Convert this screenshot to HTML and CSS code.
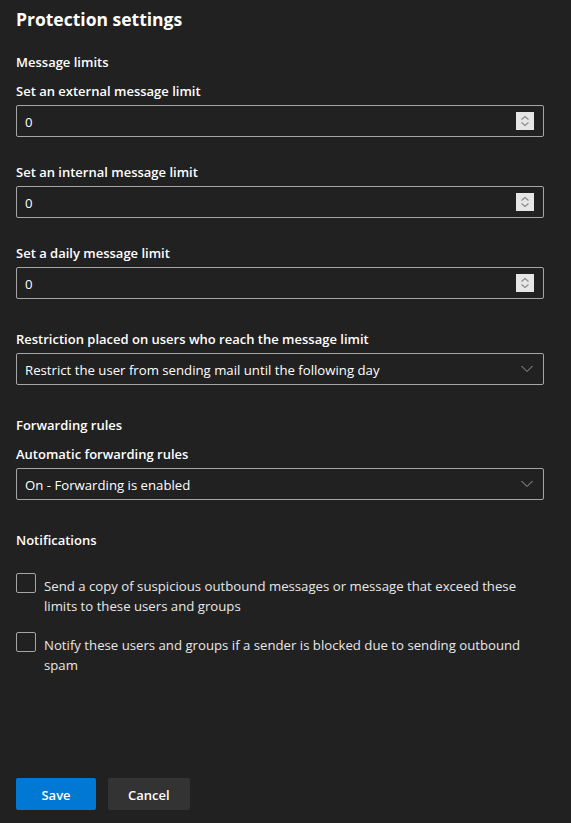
FILE: index.html
```html
<!DOCTYPE html>
<html lang="en">
<head>
  <meta charset="UTF-8" />
  <title>Protection settings</title>
  <link rel="stylesheet" href="styles.css">
</head>
<body>
<main class="panel">
  <h1>Protection settings</h1>

  <h2 class="group">Message limits</h2>
  <label class="label first">Set an external message limit</label>
  <div class="input">
    <span class="value">0</span>
    <span class="spin"><svg viewBox="0 0 18 18" width="18" height="18"><path d="M5.5 7.5 9 4.5l3.5 3M5.5 10.5 9 13.5l3.5-3" fill="none" stroke="#8a8a8a" stroke-width="1.1"/></svg></span>
  </div>

  <label class="label">Set an internal message limit</label>
  <div class="input">
    <span class="value">0</span>
    <span class="spin"><svg viewBox="0 0 18 18" width="18" height="18"><path d="M5.5 7.5 9 4.5l3.5 3M5.5 10.5 9 13.5l3.5-3" fill="none" stroke="#8a8a8a" stroke-width="1.1"/></svg></span>
  </div>

  <label class="label">Set a daily message limit</label>
  <div class="input">
    <span class="value">0</span>
    <span class="spin"><svg viewBox="0 0 18 18" width="18" height="18"><path d="M5.5 7.5 9 4.5l3.5 3M5.5 10.5 9 13.5l3.5-3" fill="none" stroke="#8a8a8a" stroke-width="1.1"/></svg></span>
  </div>

  <label class="label spaced">Restriction placed on users who reach the message limit</label>
  <div class="input">
    <span class="value">Restrict the user from sending mail until the following day</span>
    <svg class="chev" viewBox="0 0 12 8" width="12" height="8"><path d="M0.5 1 6 6.5 11.5 1" fill="none" stroke="#a0a0a0" stroke-width="1"/></svg>
  </div>

  <h2 class="group spaced">Forwarding rules</h2>
  <label class="label first">Automatic forwarding rules</label>
  <div class="input">
    <span class="value">On - Forwarding is enabled</span>
    <svg class="chev" viewBox="0 0 12 8" width="12" height="8"><path d="M0.5 1 6 6.5 11.5 1" fill="none" stroke="#a0a0a0" stroke-width="1"/></svg>
  </div>

  <h2 class="group spaced">Notifications</h2>
  <div class="checks">
    <label class="check">
      <span class="box"></span>
      <span class="text">Send a copy of suspicious outbound messages or message that exceed these limits to these users and groups</span>
    </label>
    <label class="check">
      <span class="box"></span>
      <span class="text">Notify these users and groups if a sender is blocked due to sending outbound spam</span>
    </label>
  </div>

  <div class="actions">
    <button class="btn primary">Save</button>
    <button class="btn">Cancel</button>
  </div>
</main>
</body>
</html>
```

FILE: styles.css
```css
/* Base */
* { margin: 0; padding: 0; box-sizing: border-box; }
html, body {
  background: #212121; color: #fff;
  font-family: 'Segoe UI', 'Open Sans', sans-serif; font-size: 13.2px;
}
.panel { padding: 5px 27px 0 16px; display: flex; flex-direction: column; }
h1 { font-size: 17.5px; font-weight: 700; line-height: 28px; }
.group { font-size: 13px; font-weight: 600; line-height: 20px; margin-top: 19px; }
.group.spaced { margin-top: 30px; }
/* Fields */
.label { display: block; font-size: 13px; font-weight: 600; line-height: 20px; margin: 25px 0 4px; }
.label.first { margin-top: 9px; }
.label.spaced { margin-top: 30px; }
.input {
  height: 32px; border: 1px solid #a6a6a6; border-radius: 2px;
  display: flex; align-items: center; justify-content: space-between;
  padding: 0 9px 0 8px; line-height: 20px;
}
.value { padding-top: 2px; }
.spin {
  width: 18px; height: 18px; background: #e6e6e6; display: flex;
}
.chev { margin-right: 1px; }
/* Checkboxes */
.checks { display: flex; flex-direction: column; gap: 19px; margin-top: 24px; }
.check { display: flex; gap: 8px; line-height: 20px; color: #e8e8e8; padding-right: 20px; }
.check .text { padding-top: 2px; margin-bottom: -2px; }
.box {
  flex: none; width: 20px; height: 20px; margin-top: -1px;
  border: 1px solid #a6a6a6; border-radius: 2px;
}
/* Buttons */
.actions { display: flex; gap: 12px; margin-top: 105px; }
.btn {
  height: 32px; border: 0; border-radius: 2px; padding: 2px 20px 0;
  font: 600 13px 'Segoe UI', 'Open Sans', sans-serif;
  background: #333; color: #fff; min-width: 80px;
}
.btn.primary { background: #0078d4; }
```
